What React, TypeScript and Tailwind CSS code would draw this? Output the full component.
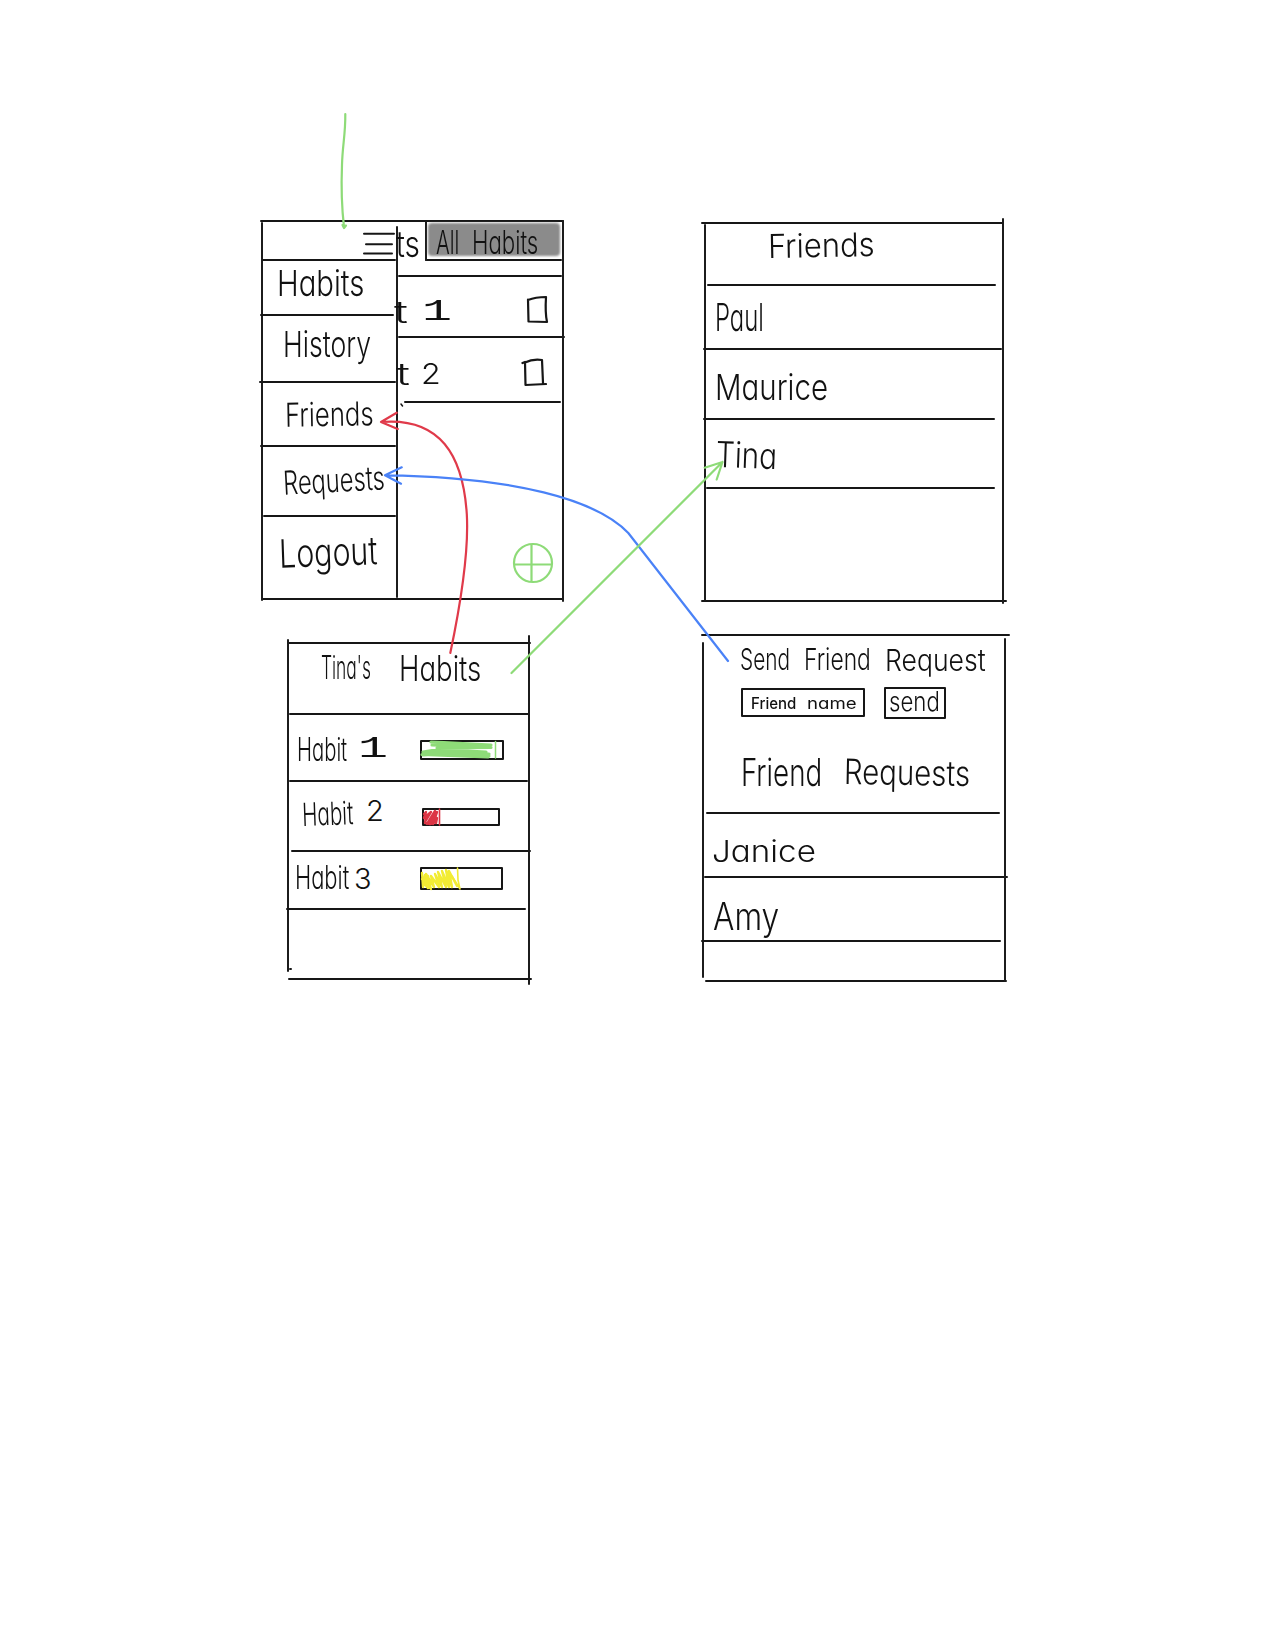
import { useLayoutEffect, useRef, useState } from 'react'

// A word set in the plain label face, squeezed or stretched to the width of its box.
function Word({ text, className }: { text: string; className: string }) {
  const box = useRef<HTMLSpanElement>(null)
  const ink = useRef<HTMLSpanElement>(null)
  const [scale, setScale] = useState(1)
  useLayoutEffect(() => {
    if (box.current && ink.current) setScale(box.current.clientWidth / ink.current.offsetWidth)
  }, [])
  return (
    <span ref={box} className={'block shrink-0 whitespace-nowrap ' + className}>
      <span ref={ink} className="inline-block origin-left align-top" style={{ transform: `scaleX(${scale})` }}>
        {text}
      </span>
    </span>
  )
}

const Rule = ({ className = '' }: { className?: string }) => (
  <div className={'h-[2px] shrink-0 rounded-full bg-[#161616] ' + className} />
)
const Wall = ({ className = '' }: { className?: string }) => (
  <div className={'w-[2px] shrink-0 rounded-full bg-[#1c1c1c] ' + className} />
)

function HabitsScreen() {
  return (
    <section className="h-[380px] w-[303px]">
      <Rule className="-ml-px w-[304px]" />
      <div className="flex h-[376px] items-start">
        <Wall className="h-[379px]" />
        <nav className="w-[133px] shrink-0">
          <div className="h-[37px] pt-[10px]">
            <svg className="ml-[99px] h-[24px] w-[34px]" fill="none" stroke="#161616" strokeWidth="2" strokeLinecap="round">
              <path d="M2 1.700H32M4 12.200H30M2 21.500H30" />
            </svg>
          </div>
          <Rule className="-ml-px" />
          <div className="h-[53px] pt-[9px] pl-[14px]">
            <Word text="Habits" className="h-[27px] w-[87px] text-[36px] leading-[27px]" />
          </div>
          <Rule className="-ml-[3px] w-[134px]" />
          <div className="h-[65px] pt-[15px] pl-[20px]">
            <Word text="History" className="h-[26px] w-[88px] text-[36px] leading-[26px]" />
          </div>
          <Rule className="-ml-[4px] w-[137px]" />
          <div className="h-[62px] pt-[19px] pl-[22px]">
            <Word text="Friends" className="h-[25px] w-[89px] -rotate-1 text-[33px] leading-[25px]" />
          </div>
          <Rule className="-ml-[3px] w-[136px]" />
          <div className="h-[68px] pt-[21px] pl-[20px]">
            <Word text="Requests" className="h-[24px] w-[102px] -rotate-3 text-[33px] leading-[24px]" />
          </div>
          <Rule />
          <div className="h-[81px] pt-[20px] pl-[16px]">
            <Word text="Logout" className="h-[29px] w-[98px] -rotate-2 text-[39px] leading-[29px]" />
          </div>
        </nav>
        <Wall className="mt-[4px] h-[372px]" />
        <div className="w-[164px] shrink-0">
          <div className="flex h-[37px]">
            <div className="w-[27px] pt-[9px]">
              <Word text="ts" className="-ml-[2px] h-[26px] w-[24px] text-[36px] leading-[26px]" />
            </div>
            <Wall className="-mt-px h-[40px]" />
            <div className="relative flex-1">
              <div className="absolute top-px left-px h-[33px] w-[132px] rounded-sm bg-[#8b8b8b] blur-[1px]" />
              <div className="relative flex gap-[13px] pt-[9px] pl-[9px]">
                <Word text="All" className="h-[23px] w-[23px] text-[32px] leading-[23px]" />
                <Word text="Habits" className="h-[23px] w-[66px] text-[32px] leading-[23px]" />
              </div>
            </div>
          </div>
          <Rule className="ml-[27px]" />
          <div className="h-[14px]" />
          <Rule />
          <div className="flex h-[59px] pt-[24px]">
            <Word text="t" className="-ml-[4px] h-[22px] w-[14px] text-[30px] leading-[22px]" />
            <Word text="1" className="mt-px ml-[14px] h-[20px] w-[30px] font-['Liberation_Mono',monospace] text-[30px] leading-[20px]" />
            <svg className="-mt-[6px] ml-[73px] h-[30px] w-[24px]" fill="none" stroke="#161616" strokeWidth="2.200" strokeLinecap="round" strokeLinejoin="round">
              <path d="M3 4.500L3.500 26.500L22 27C20.500 20 20.500 10 21 2C14 2 8 3 3 5" />
            </svg>
          </div>
          <Rule className="w-[167px]" />
          <div className="flex h-[63px] pt-[25px]">
            <Word text="t" className="-ml-[2px] h-[22px] w-[14px] text-[30px] leading-[22px]" />
            <Word text="2" className="ml-[11px] h-[21px] w-[20px] text-[29px] leading-[21px]" />
            <svg className="-mt-[5px] ml-[80px] h-[30px] w-[26px]" fill="none" stroke="#161616" strokeWidth="2.200" strokeLinecap="round" strokeLinejoin="round">
              <path d="M1.500 5L4 4L4.500 27L25 26M22 25L21 2C14 1 9 2 4 4.500" />
            </svg>
          </div>
          <Rule className="ml-[6px] w-[157px]" />
          <svg className="h-[5px] w-[8px]" stroke="#161616" strokeWidth="1.500" strokeLinecap="round">
            <path d="M3 1L4.500 3" />
          </svg>
          <svg className="mt-[134px] ml-[114px] h-[42px] w-[42px]" fill="none" stroke="#8edb78" strokeWidth="2.200">
            <circle cx="21" cy="21" r="19" />
            <path d="M19.500 2V40M2 22.500H40" />
          </svg>
        </div>
        <Wall className="-mt-[2px] h-[382px]" />
      </div>
      <Rule />
    </section>
  )
}

function FriendsScreen() {
  return (
    <section className="ml-[2px] h-[380px] w-[300px]">
      <Rule className="-ml-[3px] w-[302px]" />
      <div className="flex h-[376px] items-start">
        <Wall className="h-[377px]" />
        <div className="w-[296px] shrink-0">
          <div className="h-[60px] pt-[9px] pl-[62px]">
            <Word text="Friends" className="h-[25px] w-[107px] -rotate-1 text-[33px] leading-[25px]" />
          </div>
          <Rule className="ml-px w-[289px]" />
          <div className="h-[62px] pt-[17px] pl-[9px]">
            <Word text="Paul" className="h-[29px] w-[49px] text-[38px] leading-[29px]" />
          </div>
          <Rule className="-ml-[3px] w-[299px]" />
          <div className="h-[68px] pt-[24px] pl-[9px]">
            <Word text="Maurice" className="h-[27px] w-[113px] text-[36px] leading-[27px]" />
          </div>
          <Rule className="-ml-[3px] w-[292px]" />
          <div className="h-[67px] pt-[22px] pl-[10px]">
            <Word text="Tina" className="h-[27px] w-[61px] rotate-2 text-[36px] leading-[27px]" />
          </div>
          <Rule className="w-[289px]" />
        </div>
        <Wall className="-mt-[6px] h-[386px]" />
      </div>
      <Rule className="-ml-[3px] w-[306px]" />
    </section>
  )
}

function TinaScreen() {
  return (
    <section className="ml-[26px] w-[243px]">
      <Rule className="ml-px w-[243px]" />
      <div className="flex h-[334px] items-start">
        <Wall className="-mt-[5px] h-[333px]" />
        <div className="w-[239px] shrink-0">
          <div className="flex h-[69px] pt-[10px] pl-[32px]">
            <Word text="Tina's" className="mt-[2px] h-[23px] w-[50px] text-[32px] leading-[23px]" />
            <Word text="Habits" className="mt-px ml-[28px] h-[26px] w-[82px] text-[35px] leading-[26px]" />
          </div>
          <Rule className="w-[241px]" />
          <div className="flex h-[65px] items-start pt-[23px] pl-[8px]">
            <Word text="Habit" className="h-[23px] w-[50px] text-[32px] leading-[23px]" />
            <Word text="1" className="mt-px ml-[11px] h-[20px] w-[30px] font-['Liberation_Mono',monospace] text-[30px] leading-[20px]" />
            <div className="mt-[2px] ml-[32px] h-[20px] w-[84px] rounded-[1px] border-2 border-[#161616]">
              <svg className="-m-[2px] h-[20px] w-[83px] overflow-visible" fill="none" stroke="#8edb78" strokeWidth="3.200" strokeLinecap="round" strokeLinejoin="round">
                <path d="M11 2L24 2.500L71 5L12 5L71 7.500L17 8L40 10L12 10.500L3 12L69 14L2 14.500L68 17L14 13M30 10L66 12M3 15L22 14L69 16" />
                <path d="M75.500 1.500V18" strokeWidth="1.500" />
              </svg>
            </div>
          </div>
          <Rule />
          <div className="flex h-[68px] items-start pt-[20px] pl-[13px]">
            <Word text="Habit" className="h-[23px] w-[51px] -rotate-2 text-[32px] leading-[23px]" />
            <Word text="2" className="-mt-[2px] ml-[13px] h-[21px] w-[18px] text-[29px] leading-[21px]" />
            <div className="mt-[6px] ml-[38px] h-[18px] w-[78px] rounded-[1px] border-2 border-[#161616]">
              <svg className="-m-[2px] h-[18px] w-[78px] overflow-visible" fill="none" stroke="#dc3545" strokeWidth="2.400" strokeLinecap="round" strokeLinejoin="round">
                <path d="M2 6L4 4L2 10L9 4L3 14L5 16L13 3L7 16L9 16L15 4L11 16L15 10L14 15M4 8L3 15" />
                <path d="M17.500 1V17" strokeWidth="1.600" />
              </svg>
            </div>
          </div>
          <Rule className="ml-[2px] w-[240px]" />
          <div className="flex h-[56px] items-start pt-[14px] pl-[6px]">
            <Word text="Habit" className="h-[23px] w-[54px] text-[32px] leading-[23px]" />
            <Word text="3" className="mt-[2px] ml-[5px] h-[21px] w-[18px] text-[29px] leading-[21px]" />
            <div className="mt-px ml-[48px] h-[23px] w-[83px] rounded-[1px] border-2 border-[#161616]">
              <svg className="-m-[2px] h-[23px] w-[83px] overflow-visible" fill="none" stroke="#f2ec34" strokeWidth="2.400" strokeLinecap="round" strokeLinejoin="round">
                <path d="M2 6L3 20L5 8L8 21L2 12L11 22L6 7L14 20L11 9L19 20L15 7L22 20L18 5L26 20L22 4L29 20L26 3L32 20L29 4L37 19M8 9L10 18M3 15L7 20" />
                <path d="M37.500 1L38 13L40 22L32 9" strokeWidth="1.600" />
              </svg>
            </div>
          </div>
          <Rule className="-ml-[3px] w-[240px]" />
          <Rule className="mt-[58px] w-[3px]" />
        </div>
        <Wall className="-mt-[9px] h-[350px]" />
      </div>
      <Rule className="ml-px w-[244px]" />
    </section>
  )
}

function RequestsScreen() {
  return (
    <section className="w-[304px]">
      <Rule className="-ml-px w-[309px]" />
      <div className="flex h-[344px] items-start">
        <Wall className="mt-[6px] h-[336px]" />
        <div className="w-[300px] shrink-0">
          <div className="h-[176px] pt-[12px]">
            <div className="flex pl-[36px]">
              <Word text="Send" className="h-[22px] w-[50px] text-[30px] leading-[22px]" />
              <Word text="Friend" className="ml-[14px] h-[22px] w-[67px] text-[30px] leading-[22px]" />
              <Word text="Request" className="mt-px ml-[14px] h-[22px] w-[101px] text-[30px] leading-[22px]" />
            </div>
            <div className="mt-[16px] flex items-start pl-[37px]">
              <div className="mt-px flex h-[29px] w-[124px] rounded-[1px] border-2 border-[#161616] pt-[7px] pl-[8px]">
                <Word text="Friend" className="h-[12px] w-[45px] text-[16px] leading-[12px] font-medium" />
                <Word text="name" className="ml-[11px] h-[12px] w-[50px] text-[16px] leading-[12px] font-normal" />
              </div>
              <div className="ml-[19px] h-[32px] w-[62px] rounded-[1px] border-2 border-[#161616] pt-[3px] pl-[3px]">
                <Word text="send" className="h-[20px] w-[51px] text-[27px] leading-[20px]" />
              </div>
            </div>
            <div className="mt-[39px] flex pl-[37px]">
              <Word text="Friend" className="h-[29px] w-[81px] text-[38px] leading-[29px]" />
              <Word text="Requests" className="mt-px ml-[22px] h-[26px] w-[126px] rotate-1 text-[35px] leading-[26px]" />
            </div>
          </div>
          <Rule className="ml-[2px] w-[294px]" />
          <div className="h-[62px] pt-[26px] pl-[8px]">
            <Word text="Janice" className="h-[22px] w-[104px] text-[30px] leading-[22px]" />
          </div>
          <Rule className="w-[304px]" />
          <div className="h-[62px] pt-[24px] pl-[9px]">
            <Word text="Amy" className="h-[28px] w-[66px] text-[38px] leading-[28px]" />
          </div>
          <Rule className="-ml-[3px] w-[300px]" />
        </div>
        <Wall className="mt-[2px] h-[344px]" />
      </div>
      <Rule className="ml-[3px] w-[302px]" />
    </section>
  )
}

// Navigation arrows running across the screens.
const Arrows = () => (
  <svg className="pointer-events-none absolute inset-0 h-[1650px] w-[1275px]" fill="none" strokeWidth="2.200" strokeLinecap="round" strokeLinejoin="round">
    <path stroke="#8edb78" d="M345.300 114C345.500 135 342.500 145 342 165C341 190 342 210 344 227M342.500 225L344 228L346 225.500" />
    <path stroke="#e03a4a" d="M450.300 653C461 602 469 552 466.800 514C463 455 440 417 381 422M396.700 412.700L381 422L397.700 429" />
    <path stroke="#4a82f7" d="M728 661L628.300 533C597 500 515 477 385 475.300M401.700 467.300L385 475.300L401 483.700" />
    <path stroke="#8edb78" d="M511.500 673L722.500 462M704.700 467.700L722.500 462L716.700 479.500" />
  </svg>
)

export default function App() {
  return (
    <main className="relative h-[1650px] w-[1275px] overflow-hidden bg-white font-['Inter',sans-serif] font-[350] text-[#111111] [font-feature-settings:'cv11']">
      <div className="flex items-start pt-[220px] pl-[261px]">
        <div className="flex w-[303px] flex-col gap-[42px]">
          <HabitsScreen />
          <TinaScreen />
        </div>
        <div className="mt-[2px] ml-[138px] flex w-[304px] flex-col gap-[32px]">
          <FriendsScreen />
          <RequestsScreen />
        </div>
      </div>
      <Arrows />
    </main>
  )
}
